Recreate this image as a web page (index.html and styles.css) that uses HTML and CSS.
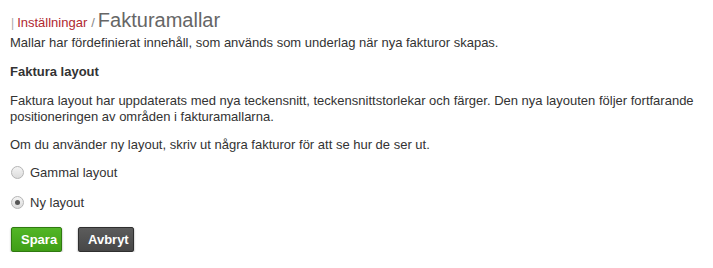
FILE: index.html
```html
<!DOCTYPE html>
<html lang="sv">
<head>
<meta charset="utf-8">
<title>Fakturamallar</title>
<link rel="stylesheet" href="styles.css">
</head>
<body>
<div class="page">
  <h1 class="crumbs"><span class="bar">|</span><a class="crumb-link" href="#">Inställningar</a><span class="sep">/</span><span class="title">Fakturamallar</span></h1>
  <p class="intro">Mallar har fördefinierat innehåll, som används som underlag när nya fakturor skapas.</p>
  <h2 class="section">Faktura layout</h2>
  <p class="para">Faktura layout har uppdaterats med nya teckensnitt, teckensnittstorlekar och färger. Den nya layouten följer fortfarande positioneringen av områden i fakturamallarna.</p>
  <p class="para2">Om du använder ny layout, skriv ut några fakturor för att se hur de ser ut.</p>
  <div class="options">
    <label class="opt"><input type="radio" name="layout" class="radio"> <span>Gammal layout</span></label>
    <label class="opt"><input type="radio" name="layout" class="radio" checked> <span>Ny layout</span></label>
  </div>
  <div class="actions">
    <button class="btn btn-save">Spara</button>
    <button class="btn btn-cancel">Avbryt</button>
  </div>
</div>
</body>
</html>
```

FILE: styles.css
```css
html, body {
  margin: 0;
  padding: 0;
  background: #fff;
}
body {
  font-family: "Liberation Sans", Arial, sans-serif;
  font-size: 13px;
  color: #333;
}
.page {
  padding: 4px 10px 0 10px;
}
.crumbs {
  margin: 0;
  font-weight: normal;
  line-height: 28px;
  height: 28px;
  white-space: nowrap;
}
.bar {
  color: #aaa;
  font-size: 12px;
  margin-left: 1px;
  margin-right: 3px;
}
.crumb-link {
  color: #b0282f;
  text-decoration: none;
  font-size: 13px;
}
.sep {
  color: #888;
  font-size: 13px;
  margin: 0 3px 0 4px;
}
.title {
  color: #666;
  font-size: 20px;
}
.intro {
  margin: 0;
  line-height: 16px;
  padding-top: 3px;
}
.section {
  margin: 0;
  font-size: 13px;
  font-weight: bold;
  line-height: 16px;
  padding-top: 13px;
}
.para {
  margin: 0;
  line-height: 16px;
  padding-top: 13px;
}
.para2 {
  margin: 0;
  line-height: 16px;
  padding-top: 12px;
}
.options {
  display: flex;
  flex-direction: column;
  gap: 14px;
  padding-top: 11px;
}
.opt {
  display: flex;
  align-items: center;
  gap: 6px;
  height: 16px;
  cursor: pointer;
}
.radio {
  appearance: none;
  -webkit-appearance: none;
  margin: 0 0 0 1px;
  width: 13px;
  height: 13px;
  border-radius: 50%;
  border: 1px solid #b5b5b5;
  background: linear-gradient(#f4f4f4, #dcdcdc);
  box-sizing: border-box;
  position: relative;
}
.radio:checked::after {
  content: "";
  position: absolute;
  left: 3px;
  top: 3px;
  width: 5px;
  height: 5px;
  border-radius: 50%;
  background: #555;
}
.actions {
  display: flex;
  gap: 16px;
  padding-top: 17px;
  padding-left: 1px;
}
.btn {
  font-family: "Liberation Sans", Arial, sans-serif;
  font-size: 13px;
  font-weight: bold;
  color: #fff;
  height: 25px;
  padding: 0 9px;
  border-radius: 2px;
  box-shadow: 0 1px 2px rgba(0,0,0,0.45);
  cursor: pointer;
}
.btn-save {
  background: linear-gradient(#52b626, #3f9e16);
  border: 1px solid #2f7a10;
  width: 51px;
}
.btn-cancel {
  background: linear-gradient(#5c5c5c, #474747);
  border: 1px solid #2f2f2f;
  width: 56px;
}
```
